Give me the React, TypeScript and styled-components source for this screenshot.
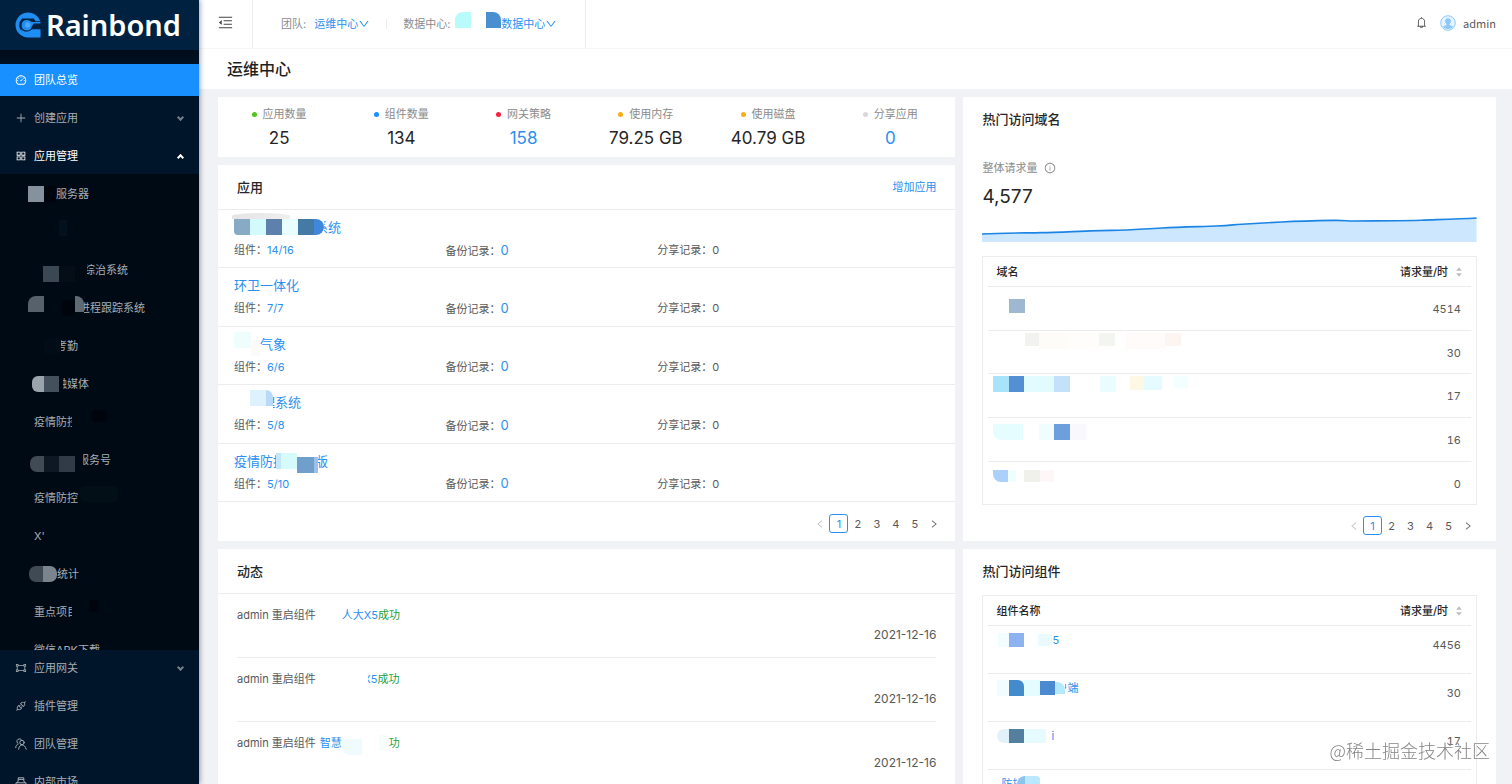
import React from "react";
import styled, { createGlobalStyle, css } from "styled-components";
import {
  AiOutlineDashboard,
  AiOutlinePlus,
  AiOutlineAppstore,
  AiOutlineGateway,
  AiOutlineApi,
  AiOutlineMenuFold,
  AiOutlineBell,
  AiOutlineInfoCircle,
  AiOutlineDown,
  AiOutlineLeft,
  AiOutlineRight,
  AiFillCaretUp,
  AiFillCaretDown,
} from "react-icons/ai";

const GlobalStyle = createGlobalStyle`
  *, *::before, *::after { box-sizing: border-box; }
  body {
    margin: 0;
    background: #f0f2f5;
    color: #595959;
    font-family: Inter, "Noto Sans CJK SC", sans-serif;
    font-size: 11px;
    line-height: 16px;
  }
  h1, h2, p, ul, dl, dd { margin: 0; padding: 0; }
  ul { list-style: none; }
  a { color: #2b90f0; text-decoration: none; }
  button { font: inherit; color: inherit; background: none; border: 0; padding: 0; cursor: pointer; }
`;

/* ---------- masked names ---------- */

type Align = "start" | "center" | "end";
type Piece =
  | { kind: "tile"; w: number; color: string; h?: number; radius?: string; align?: Align }
  | { kind: "gap"; w: number }
  | { kind: "text"; text: string; cut?: number; side?: "left" | "right" };

const tile = (w: number, color: string, align: Align = "center", radius = "0", h = 16): Piece => ({
  kind: "tile", w, color, align, radius, h,
});
const gap = (w: number): Piece => ({ kind: "gap", w });
const text = (t: string): Piece => ({ kind: "text", text: t });
/* keeps only one side of a partly covered character */
const part = (t: string, cut: number, side: "left" | "right"): Piece => ({ kind: "text", text: t, cut, side });

const Strip = styled.span`
  display: flex;
  align-items: center;
  height: 24px;
  white-space: nowrap;
`;
const Tile = styled.span<{ $w: number; $h: number; $color: string; $radius: string; $align: Align }>`
  flex: none;
  width: ${(p) => p.$w}px;
  height: ${(p) => p.$h}px;
  background: ${(p) => p.$color};
  border-radius: ${(p) => p.$radius};
  align-self: ${(p) => (p.$align === "center" ? "center" : `flex-${p.$align}`)};
`;
const Gap = styled.span<{ $w: number }>`
  flex: none;
  width: ${(p) => p.$w}px;
`;
const Part = styled.span<{ $w: number; $side: "left" | "right" }>`
  display: flex;
  flex: none;
  overflow: hidden;
  width: ${(p) => p.$w}px;
  justify-content: ${(p) => (p.$side === "right" ? "flex-end" : "flex-start")};
`;

function MaskedName({ pieces }: { pieces: Piece[] }) {
  return (
    <Strip>
      {pieces.map((p, i) => {
        if (p.kind === "tile")
          return <Tile key={i} $w={p.w} $h={p.h ?? 16} $color={p.color} $radius={p.radius ?? "0"} $align={p.align ?? "center"} />;
        if (p.kind === "gap") return <Gap key={i} $w={p.w} />;
        if (p.cut) return <Part key={i} $w={p.cut} $side={p.side ?? "left"}>{p.text}</Part>;
        return <span key={i}>{p.text}</span>;
      })}
    </Strip>
  );
}

/* ---------- shell and sidebar ---------- */

const Shell = styled.div`
  display: flex;
  height: 100vh;
`;
const Sidebar = styled.aside`
  position: relative;
  z-index: 2;
  flex: none;
  width: 199px;
  overflow: hidden;
  background: #001529;
  color: #a6adb4;
  box-shadow: 1px 0 5px rgba(0, 21, 60, 0.4);
  clip-path: inset(0 -12px 0 0);
`;
const Brand = styled.a`
  display: flex;
  align-items: center;
  gap: 4px;
  height: 50px;
  padding-left: 15px;
  background: #002140;
  color: #fff;
  font-family: "Noto Sans", sans-serif;
  font-size: 29px;
  font-weight: 600;
  line-height: 48px;
  svg { flex: none; }
`;
const Menu = styled.ul`
  padding-top: 14px;
  background: linear-gradient(#000c1b, #001529 24px);
`;
const MenuItem = styled.li`
  & + & { margin-top: 6px; }
`;
const MenuLink = styled.a<{ $active?: boolean; $open?: boolean }>`
  display: flex;
  align-items: center;
  height: 32px;
  padding: 0 13px 0 15px;
  color: ${(p) => (p.$active || p.$open ? "#fff" : "#a6adb4")};
  background: ${(p) => (p.$active ? "#1890ff" : "transparent")};
  svg { flex: none; width: 12px; height: 12px; margin-right: 7px; }
  span { flex: 1; }
`;
const Caret = styled.i<{ $up?: boolean }>`
  width: 5px;
  height: 5px;
  margin: 0 3px;
  border: solid currentColor;
  border-width: 0 2px 2px 0;
  opacity: ${(p) => (p.$up ? 1 : 0.7)};
  transform: ${(p) => (p.$up ? "translateY(1px) rotate(-135deg)" : "translateY(-1px) rotate(45deg)")};
`;
const SubMenu = styled.ul`
  height: 476px;
  margin: 2px 0;
  padding-top: 4px;
  overflow: hidden;
  background: #000a14;
`;
const SubLink = styled.a`
  display: flex;
  align-items: center;
  height: 32px;
  margin-bottom: 6px;
  padding-left: 28px;
  color: #a6adb4;
`;

const dark = "#00040c";
const subItems: Piece[][] = [
  [tile(16, "#85929e"), tile(12, dark), text("服务器")],
  [gap(31), tile(8, "#02111d", "start")],
  [gap(15), tile(16, "#3b4854", "end"), tile(16, "#050d16", "end"), gap(12), part("综", 8, "right"), text("治系统")],
  [tile(16, "#57616b", "start", "8px 0 0 0"), gap(18), tile(13, dark), tile(9, "#5f6a74", "start", "0 8px 0 0"), part("进", 6, "right"), text("程跟踪系统")],
  [gap(16), tile(16, "#010d16"), gap(1), part("考", 6, "right"), text("勤")],
  [gap(4), tile(12, "#9aa4ad", "center", "6px 0 0 6px"), tile(15, "#44505b"), gap(4), part("融", 4, "right"), text("媒体")],
  [gap(6), text("疫情防"), part("控", 5, "left"), gap(19), tile(16, dark, "start", "4px", 12)],
  [gap(2), tile(14, "#404b55", "end", "7px 0 0 7px"), tile(15, "#0d1822", "end"), tile(16, "#303b47", "end"), gap(8), part("服", 6, "right"), text("务号")],
  [gap(6), text("疫情防控"), gap(2), tile(38, "#030f16", "start", "4px")],
  [gap(6), text("X'")],
  [gap(1), tile(14, "#3f4a54", "center", "7px 0 0 7px"), tile(14, "#7a848c", "center", "0 7px 7px 0"), text("统计")],
  [gap(6), text("重点项"), part("目", 5, "left"), gap(17), tile(10, dark, "start", "4px", 12)],
  [gap(6), text("微信APK下载")],
];

function BrandMark() {
  return (
    <svg width="27" height="26" viewBox="0 0 27 26" aria-hidden="true">
      <path fill="#1f8df2" d="M13 0.500C19 0.500 23.600 4 25.300 9.300H20.600L18.800 6.400H7.200L5 9.600A9.400 9.400 0 0 0 4.200 13C4.200 18.200 8.200 21.400 13 21.400L25.500 21.500V25.500H13A12.500 12.500 0 0 1 13 0.500Z" />
      <path fill="#1f8df2" d="M11.800 8A5.200 5.200 0 1 0 16.800 14.500L18.800 11.600H25.400V10H18.400L16.200 9.800A5.200 5.200 0 0 0 11.800 8Z" />
      <path fill="#1f8df2" d="M5.600 16.500C7.800 20.200 13.600 20.800 17 17.200H25.500V22.500H12C8.500 22 6 19.500 5.600 16.500Z" />
      <circle cx="12.600" cy="12.900" r="2.600" fill="#4ba8fb" />
    </svg>
  );
}
function PeopleIcon() {
  return (
    <svg viewBox="0 0 12 12" fill="none" stroke="currentColor" strokeWidth="1" strokeLinecap="round">
      <circle cx="7" cy="4.500" r="2.200" />
      <path d="M3.600 11.200C4 8.600 5.300 6.900 7 6.900S10.600 8.600 11.200 11.200" />
      <path d="M6 1.200C3.600 0.200 1.600 1.600 2 3.800C2.200 4.800 2.700 5.400 3.300 5.800C1.800 6.500 0.900 7.800 0.700 9.600" />
    </svg>
  );
}
function MarketIcon() {
  return (
    <svg viewBox="0 0 12 12" fill="none" stroke="currentColor" strokeWidth="1">
      <path d="M3.200 5V1.800H8.800V5M3.200 3.400H8.800M1 10.800V6.800H11V10.800Z" />
      <path d="M3.200 5L2 6.800M8.800 5L10 6.800" />
    </svg>
  );
}

/* ---------- header ---------- */

const Main = styled.main`
  display: flex;
  flex-direction: column;
  flex: 1;
  min-width: 0;
  overflow-y: auto;
  scrollbar-width: none;
`;
const Header = styled.header`
  display: flex;
  flex: none;
  height: 48px;
  padding-right: 16px;
  background: #fff;
`;
const FoldButton = styled.button`
  display: flex;
  align-items: center;
  justify-content: center;
  width: 54px;
  padding-bottom: 4px;
  border-right: 1px solid #ececec;
  color: #434343;
`;
const Scope = styled.nav`
  display: flex;
  align-items: center;
  width: 333px;
  padding-left: 28px;
  border-right: 1px solid #ececec;
  color: #8c8c8c;
`;
const ScopePicker = styled.button<{ $wide?: boolean }>`
  display: flex;
  align-items: center;
  margin-left: ${(p) => (p.$wide ? 5 : 8)}px;
  color: #2b90f0;
`;
const Divider = styled.i`
  width: 1px;
  height: 10px;
  margin: 0 16px;
  background: #ececec;
`;
const UserArea = styled.div`
  display: flex;
  align-items: center;
  gap: 7px;
  margin-left: auto;
  padding-bottom: 3px;
  font-family: "Noto Sans CJK SC", sans-serif;
`;
const BellButton = styled.button`
  display: flex;
  margin-right: 5px;
`;
const TitleBar = styled.div`
  flex: none;
  padding: 8px 28px;
  border-top: 1px solid #f5f6f7;
  background: #fff;
  h1 { color: #1f1f1f; font-size: 16px; font-weight: 500; line-height: 24px; }
`;

function Avatar() {
  return (
    <svg width="16" height="16" viewBox="0 0 16 16" aria-hidden="true">
      <circle cx="8" cy="8" r="7.300" fill="#e6f4ff" stroke="#8cc8fa" strokeWidth="1" />
      <path fill="#8cc8fa" d="M8 3.200C10 3.200 11 4.600 10.800 6.400C10.700 7.800 10 8.600 9.400 9.300C9.600 10.600 11.600 10.700 13.200 11.800A7 7 0 0 1 2.800 11.800C4.400 10.700 6.400 10.600 6.600 9.300C6 8.600 5.300 7.800 5.200 6.400C5 4.600 6 3.200 8 3.200Z" />
    </svg>
  );
}

/* ---------- dashboard ---------- */

const Board = styled.div`
  display: grid;
  grid-template-columns: 738fr 533fr;
  align-items: start;
  gap: 8px;
  padding: 8px 16px 8px 19px;
`;
const Column = styled.div`
  display: flex;
  flex-direction: column;
  gap: 8px;
`;
const Card = styled.section`
  background: #fff;
`;
const StatGrid = styled(Card)`
  display: grid;
  grid-template-columns: repeat(6, 1fr);
  height: 60px;
  padding: 8px 4px 0 0;
  text-align: center;
`;
const StatLabel = styled.p<{ $dot: string }>`
  display: flex;
  align-items: center;
  justify-content: center;
  gap: 6px;
  height: 18px;
  color: #8c8c8c;
  &::before {
    content: "";
    width: 5px;
    height: 5px;
    border-radius: 50%;
    background: ${(p) => p.$dot};
  }
`;
const StatValue = styled.p<{ $link?: boolean }>`
  color: ${(p) => (p.$link ? "#2b90f0" : "#262626")};
  font-size: 17px;
  line-height: 30px;
`;
const CardHead = styled.div`
  display: flex;
  align-items: center;
  justify-content: space-between;
  height: 45px;
  padding: 0 19px;
  border-bottom: 1px solid #ececec;
`;
const CardTitle = styled.h2`
  color: #262626;
  font-size: 13px;
  font-weight: 500;
  line-height: 20px;
`;
const AppList = styled.ul`
  display: flex;
  flex-direction: column;
  height: 292px;
`;
const AppRow = styled.li`
  flex: 1;
  padding: 5px 16px 0;
  border-bottom: 1px solid #ececec;
`;
const AppName = styled.a`
  position: relative;
  display: block;
  width: fit-content;
  font-size: 13px;
`;
const Smudge = styled.i`
  position: absolute;
  top: -2px;
  left: -2px;
  width: 58px;
  height: 6px;
  border-radius: 50% 50% 0 0;
  background: linear-gradient(90deg, #e6e4e6, #efeeef);
`;
const AppFacts = styled.div`
  display: grid;
  grid-template-columns: 30% 30% 1fr;
  align-items: center;
  height: 22px;
`;
const BigLink = styled.a`
  font-size: 13px;
`;
const Pages = styled.nav<{ $edge?: boolean }>`
  display: flex;
  align-items: center;
  justify-content: flex-end;
  padding: ${(p) => (p.$edge ? "11px 0 6px" : "12px 12px 8px")};
`;
const PageButton = styled.button<{ $current?: boolean }>`
  display: flex;
  align-items: center;
  justify-content: center;
  width: 19px;
  height: 19px;
  border-radius: 3px;
  ${(p) =>
    p.$current &&
    css`
      border: 1px solid #2b90f0;
      color: #2b90f0;
    `}
  &:disabled { color: #bfbfbf; }
`;
const EventList = styled.ul`
  padding: 0 19px;
`;
const EventRow = styled.li`
  height: 64px;
  padding-top: 9px;
  border-bottom: 1px solid #ececec;
`;
const EventDate = styled.time`
  display: block;
  font-size: 12px;
  text-align: right;
`;
const Success = styled.span`
  color: #23a03a;
`;

const Panel = styled(Card)`
  padding: 12px 19px 0;
`;
const PanelLabel = styled.p`
  display: flex;
  align-items: center;
  gap: 7px;
  margin-top: 31px;
  color: #8c8c8c;
`;
const Total = styled.p`
  margin-top: 7px;
  color: #262626;
  font-size: 19px;
  line-height: 28px;
`;
const Spark = styled.svg`
  display: block;
  width: 100%;
  height: 26px;
  margin-top: 5px;
`;
const TableBox = styled.div`
  margin-top: 14px;
  padding: 0 5px;
  border: 1px solid #ececec;
`;
const Table = styled.table<{ $height: number; $tall?: boolean }>`
  width: 100%;
  height: ${(p) => p.$height}px;
  border-spacing: 0;
  thead { height: 30px; }
  th {
    height: 30px;
    padding: 0 8px;
    border-bottom: 1px solid #ececec;
    color: #262626;
    font-weight: 500;
    text-align: left;
  }
  td {
    padding: 2px 5px 0;
    border-bottom: 1px solid #ececec;
    vertical-align: top;
  }
  tbody tr:last-child td { border-bottom: 0; }
  td:last-child {
    padding: ${(p) => (p.$tall ? 11 : 14)}px 10px 0;
    font-variant-numeric: tabular-nums;
    text-align: right;
  }
`;
const SortButton = styled.button`
  display: flex;
  align-items: center;
  gap: 7px;
  margin-left: auto;
  font-weight: 500;
`;
const SortMark = styled.span`
  display: flex;
  flex-direction: column;
  color: #bfbfbf;
  svg { display: block; width: 8px; height: 8px; margin: -1px 0; }
`;
const Watermark = styled.div`
  position: fixed;
  z-index: 3;
  right: 22px;
  bottom: 22px;
  color: rgba(110, 110, 110, 0.85);
  font-family: "Noto Sans CJK SC", sans-serif;
  font-size: 18px;
  font-weight: 300;
  line-height: 24px;
  text-shadow: 0 0 2px #fff;
  pointer-events: none;
`;

const stats = [
  { label: "应用数量", value: "25", dot: "#52c41a" },
  { label: "组件数量", value: "134", dot: "#1890ff" },
  { label: "网关策略", value: "158", dot: "#f5223d", link: true },
  { label: "使用内存", value: "79.25 GB", dot: "#faad14" },
  { label: "使用磁盘", value: "40.79 GB", dot: "#faad14" },
  { label: "分享应用", value: "0", dot: "#d9d9d9", link: true },
];

const apps: { name: Piece[]; running: string; smudge?: boolean }[] = [
  {
    name: [
      tile(16, "#87abc4", "center", "0 0 0 4px"), tile(16, "#d3fbfd"), tile(16, "#5d80ac"), tile(16, "#e8fdff"),
      tile(16, "#4579a6"), tile(10, "#3f88dc", "center", "0 8px 8px 0"), part("系", 4, "right"), text("统"),
    ],
    running: "14/16",
    smudge: true,
  },
  { name: [text("环卫一体化")], running: "7/7" },
  { name: [tile(17, "#effefc", "start"), tile(9, "#fdfbf7", "end"), text("气象")], running: "6/6" },
  { name: [gap(16), tile(16, "#def2fe", "start"), tile(7, "#b8d9fa", "start", "0 8px 0 0"), part("理", 2, "right"), text("系统")], running: "5/8" },
  {
    name: [
      text("疫情防"), part("控", 3, "left"), tile(5, "#c3e6f8", "center"), tile(16, "#d6fbfd"),
      tile(17, "#6f9fca", "end"), tile(4, "#9cc0e8", "end"), part("版", 10, "right"),
    ],
    running: "5/10",
  },
];

const events: { component: Piece[]; result: Piece[] }[] = [
  { component: [gap(26), text("人大X5")], result: [text("成功")] },
  { component: [gap(52), part("X", 3, "right"), text("5")], result: [text("成功")] },
  { component: [gap(4), text("智慧"), tile(20, "#effbff", "end", "0 0 0 8px"), gap(17), tile(8, "#f7fdfb")], result: [gap(2), text("功")] },
];

const domains: { name: Piece[]; count: number }[] = [
  { name: [gap(16), tile(16, "#9db8d0", "end", "0", 14)], count: 4514 },
  {
    name: [gap(32), tile(14, "#f2f2ee", "start", "0", 13), tile(30, "#fefcf9", "start"), tile(30, "#fefdfc", "start"), tile(16, "#f3f5f0", "start", "0", 13), gap(10), tile(40, "#fefbfa", "start"), tile(16, "#fdf5f2", "start", "0", 13)],
    count: 30,
  },
  {
    name: [
      tile(16, "#a9e3fb", "start"), tile(15, "#548fd3", "start"), tile(30, "#e2fbff", "start"), tile(16, "#c3e2fa", "start"),
      gap(30), tile(16, "#e9fdff", "start"), gap(14), tile(14, "#fdf7e6", "start", "0", 14), tile(18, "#e6fbff", "start", "0", 14), gap(12), tile(14, "#f3feff", "start", "0", 12),
    ],
    count: 17,
  },
  { name: [tile(30, "#e6fdff", "center", "0 0 0 8px"), gap(16), tile(15, "#effdff"), tile(16, "#6c9fdb"), tile(16, "#f8f8fd")], count: 16 },
  { name: [tile(15, "#abd0fa", "center", "0 0 0 8px", 12), tile(8, "#effdff", "center", "0", 12), gap(8), tile(16, "#f0f1eb", "center", "0", 12), tile(14, "#fdf8f7", "center", "0", 12)], count: 0 },
];

const components: { name: Piece[]; count: number }[] = [
  { name: [gap(5), tile(11, "#f3fdff", "center", "0", 14), tile(15, "#8cb3ef", "center", "0", 14), gap(14), tile(14, "#e9fbff", "center", "0", 12), text("5")], count: 4456 },
  {
    name: [gap(4), tile(12, "#f1fcff", "center"), tile(15, "#438bcb", "center", "0 6px 0 0"), tile(16, "#e4fbff"), tile(15, "#4b8ad0", "center", "0", 14), tile(10, "#b5e9fc", "center", "0 8px 0 0", 12), part("户", 2, "right"), text("端")],
    count: 30,
  },
  { name: [gap(4), tile(12, "#e3f1fb", "center", "7px 0 0 7px", 14), tile(15, "#54809f", "center", "0", 14), tile(22, "#e6fbff", "center", "0", 14), gap(5), text("i")], count: 17 },
  { name: [gap(8), text("防"), part("控", 5, "left"), tile(8, "#8bc4ec", "center", "8px 0 0 0"), tile(15, "#b9e8ff", "center", "0 4px 0 0")], count: 16 },
];

function Pager({ edge }: { edge?: boolean }) {
  return (
    <Pages $edge={edge} aria-label="分页">
      <PageButton disabled aria-label="上一页"><AiOutlineLeft size={10} /></PageButton>
      {[1, 2, 3, 4, 5].map((n) => (
        <PageButton key={n} $current={n === 1}>{n}</PageButton>
      ))}
      <PageButton aria-label="下一页"><AiOutlineRight size={10} /></PageButton>
    </Pages>
  );
}

function RankTable({ heading, rows, height, tall }: { heading: string; rows: { name: Piece[]; count: number }[]; height: number; tall?: boolean }) {
  return (
    <TableBox>
      <Table $height={height} $tall={tall}>
        <thead>
          <tr>
            <th>{heading}</th>
            <th>
              <SortButton>
                请求量/时
                <SortMark><AiFillCaretUp /><AiFillCaretDown /></SortMark>
              </SortButton>
            </th>
          </tr>
        </thead>
        <tbody>
          {rows.map((r, i) => (
            <tr key={i}>
              <td><a href="#detail"><MaskedName pieces={r.name} /></a></td>
              <td>{r.count}</td>
            </tr>
          ))}
        </tbody>
      </Table>
    </TableBox>
  );
}

export default function App() {
  return (
    <>
      <GlobalStyle />
      <Shell>
        <Sidebar>
          <Brand href="#home"><BrandMark />Rainbond</Brand>
          <Menu>
            <MenuItem><MenuLink href="#overview" $active><AiOutlineDashboard /><span>团队总览</span></MenuLink></MenuItem>
            <MenuItem><MenuLink href="#create"><AiOutlinePlus /><span>创建应用</span><Caret /></MenuLink></MenuItem>
            <MenuItem>
              <MenuLink href="#apps" $open><AiOutlineAppstore /><span>应用管理</span><Caret $up /></MenuLink>
              <SubMenu>
                {subItems.map((pieces, i) => (
                  <li key={i}><SubLink href="#app"><MaskedName pieces={pieces} /></SubLink></li>
                ))}
              </SubMenu>
              <MenuLink href="#gateway"><AiOutlineGateway /><span>应用网关</span><Caret /></MenuLink>
            </MenuItem>
            <MenuItem><MenuLink href="#plugins"><AiOutlineApi /><span>插件管理</span></MenuLink></MenuItem>
            <MenuItem><MenuLink href="#team"><PeopleIcon /><span>团队管理</span></MenuLink></MenuItem>
            <MenuItem><MenuLink href="#market"><MarketIcon /><span>内部市场</span></MenuLink></MenuItem>
          </Menu>
        </Sidebar>
        <Main>
          <Header>
            <FoldButton aria-label="收起菜单"><AiOutlineMenuFold size={17} /></FoldButton>
            <Scope>
              团队:
              <ScopePicker>运维中心<AiOutlineDown size={12} /></ScopePicker>
              <Divider />
              数据中心:
              <ScopePicker $wide>
                <MaskedName
                  pieces={[
                    tile(16, "#b9fafa", "start", "8px 0 0 0"), gap(15),
                    tile(15, "#4a8fcf", "start", "0 8px 0 0"), text("数据中心"),
                  ]}
                />
                <AiOutlineDown size={12} />
              </ScopePicker>
            </Scope>
            <UserArea>
              <BellButton aria-label="通知"><AiOutlineBell size={13} /></BellButton>
              <Avatar />
              <span>admin</span>
            </UserArea>
          </Header>
          <TitleBar><h1>运维中心</h1></TitleBar>
          <Board>
            <Column>
              <StatGrid>
                {stats.map((s) => (
                  <div key={s.label}>
                    <StatLabel $dot={s.dot}>{s.label}</StatLabel>
                    <StatValue $link={s.link}>{s.value}</StatValue>
                  </div>
                ))}
              </StatGrid>
              <Card>
                <CardHead><CardTitle>应用</CardTitle><a href="#add">增加应用</a></CardHead>
                <AppList>
                  {apps.map((a) => (
                    <AppRow key={a.running}>
                      <AppName href="#app">{a.smudge && <Smudge />}<MaskedName pieces={a.name} /></AppName>
                      <AppFacts>
                        <span>组件：<a href="#parts">{a.running}</a></span>
                        <span>备份记录：<BigLink href="#backup">0</BigLink></span>
                        <span>分享记录：0</span>
                      </AppFacts>
                    </AppRow>
                  ))}
                </AppList>
                <Pager />
              </Card>
              <Card>
                <CardHead><CardTitle>动态</CardTitle></CardHead>
                <EventList>
                  {events.map((e, i) => (
                    <EventRow key={i}>
                      <Strip>
                        admin 重启组件
                        <a href="#component"><MaskedName pieces={e.component} /></a>
                        <Success><MaskedName pieces={e.result} /></Success>
                      </Strip>
                      <EventDate>2021-12-16</EventDate>
                    </EventRow>
                  ))}
                </EventList>
              </Card>
            </Column>
            <Column>
              <Panel>
                <CardTitle>热门访问域名</CardTitle>
                <PanelLabel>整体请求量 <AiOutlineInfoCircle size={12} /></PanelLabel>
                <Total>4,577</Total>
                <Spark viewBox="0 0 495 26" preserveAspectRatio="none" aria-hidden="true">
                  <path fill="#cde8fe" d="M0 18L60 17L130 15L180 12L235 10L260 8L300 6L352 4L370 5L440 4L495 2V26H0Z" />
                  <path fill="none" stroke="#1c84e4" strokeWidth="1.600" d="M0 18C20 17 40 17 60 16.600S110 14.600 130 14.400S160 13 180 12S220 10.600 235 10S250 8.800 260 8.200S285 6.800 300 6S340 4.600 352 4.400S365 5.200 372 5S425 4.800 440 4.200S475 3.200 495 2" />
                </Spark>
                <RankTable heading="域名" rows={domains} height={247} />
                <Pager edge />
              </Panel>
              <Panel>
                <CardTitle>热门访问组件</CardTitle>
                <RankTable heading="组件名称" rows={components} height={220} tall />
                <Pager edge />
              </Panel>
            </Column>
          </Board>
        </Main>
      </Shell>
      <Watermark>@稀土掘金技术社区</Watermark>
    </>
  );
}
